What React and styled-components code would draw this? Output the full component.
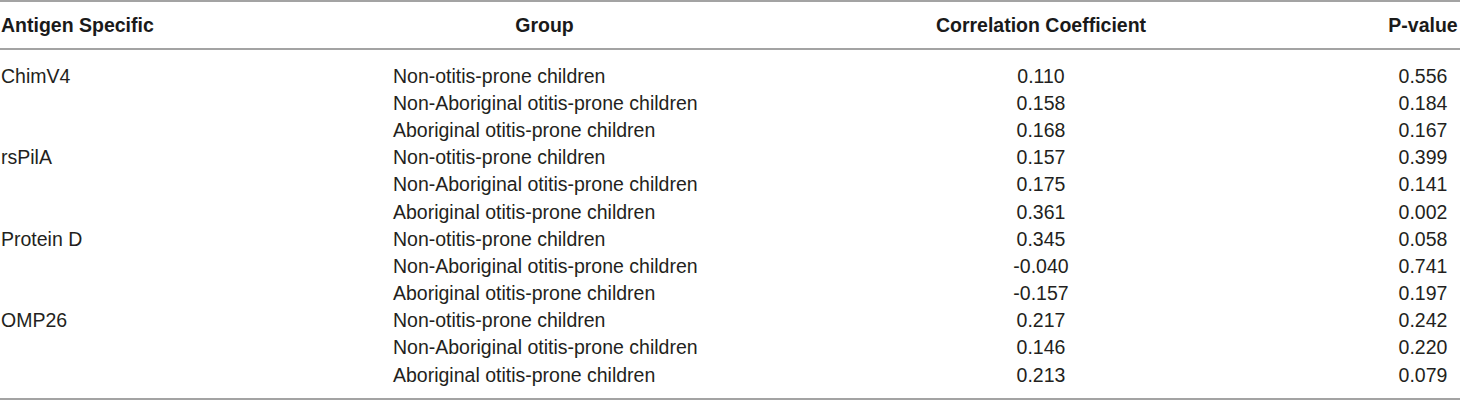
import React from 'react';
import styled, { createGlobalStyle } from 'styled-components';

const GlobalStyle = createGlobalStyle`
	body {
		margin: 0;
		background: #ffffff;
		font-family: 'Liberation Sans', Arial, sans-serif;
		color: #231f20;
	}
`;

const data = [
	{
		antigen: 'ChimV4',
		rows: [
			['Non-otitis-prone children', '0.110', '0.556'],
			['Non-Aboriginal otitis-prone children', '0.158', '0.184'],
			['Aboriginal otitis-prone children', '0.168', '0.167'],
		],
	},
	{
		antigen: 'rsPilA',
		rows: [
			['Non-otitis-prone children', '0.157', '0.399'],
			['Non-Aboriginal otitis-prone children', '0.175', '0.141'],
			['Aboriginal otitis-prone children', '0.361', '0.002'],
		],
	},
	{
		antigen: 'Protein D',
		rows: [
			['Non-otitis-prone children', '0.345', '0.058'],
			['Non-Aboriginal otitis-prone children', '-0.040', '0.741'],
			['Aboriginal otitis-prone children', '-0.157', '0.197'],
		],
	},
	{
		antigen: 'OMP26',
		rows: [
			['Non-otitis-prone children', '0.217', '0.242'],
			['Non-Aboriginal otitis-prone children', '0.146', '0.220'],
			['Aboriginal otitis-prone children', '0.213', '0.079'],
		],
	},
];

const columns = '393px 303px 1fr 74px';

const Table = styled.div`
	width: 1460px;
	border-top: 2px solid #a3a3a3;
	border-bottom: 2px solid #a3a3a3;
`;

const HeaderRow = styled.div`
	display: grid;
	grid-template-columns: ${columns};
	height: 48px;
	padding-top: 1px;
	box-sizing: border-box;
	align-items: center;
	border-bottom: 2px solid #a3a3a3;
	font-weight: 700;
	font-size: 19.5px;
	color: #1a1a1a;
`;

const Body = styled.div`
	padding: 12.5px 0 9.1px;
`;

const Row = styled.div`
	display: grid;
	grid-template-columns: ${columns};
	height: 27.2px;
	align-items: center;
	font-size: 19.5px;
`;

const Cell = styled.div`
	white-space: nowrap;
	text-align: ${p => p.$align || 'left'};
	padding-left: ${p => (p.$first ? '1px' : '0')};
`;

const App = () => (
	<>
		<GlobalStyle />
		<Table>
			<HeaderRow>
				<Cell $first>Antigen Specific</Cell>
				<Cell $align='center'>Group</Cell>
				<Cell $align='center'>Correlation Coefficient</Cell>
				<Cell $align='center'>P-value</Cell>
			</HeaderRow>
			<Body>
				{data.map(group =>
					group.rows.map((r, i) => (
						<Row key={group.antigen + i}>
							<Cell $first>{i === 0 ? group.antigen : ''}</Cell>
							<Cell>{r[0]}</Cell>
							<Cell $align='center'>{r[1]}</Cell>
							<Cell $align='center'>{r[2]}</Cell>
						</Row>
					))
				)}
			</Body>
		</Table>
	</>
);

export default App;
